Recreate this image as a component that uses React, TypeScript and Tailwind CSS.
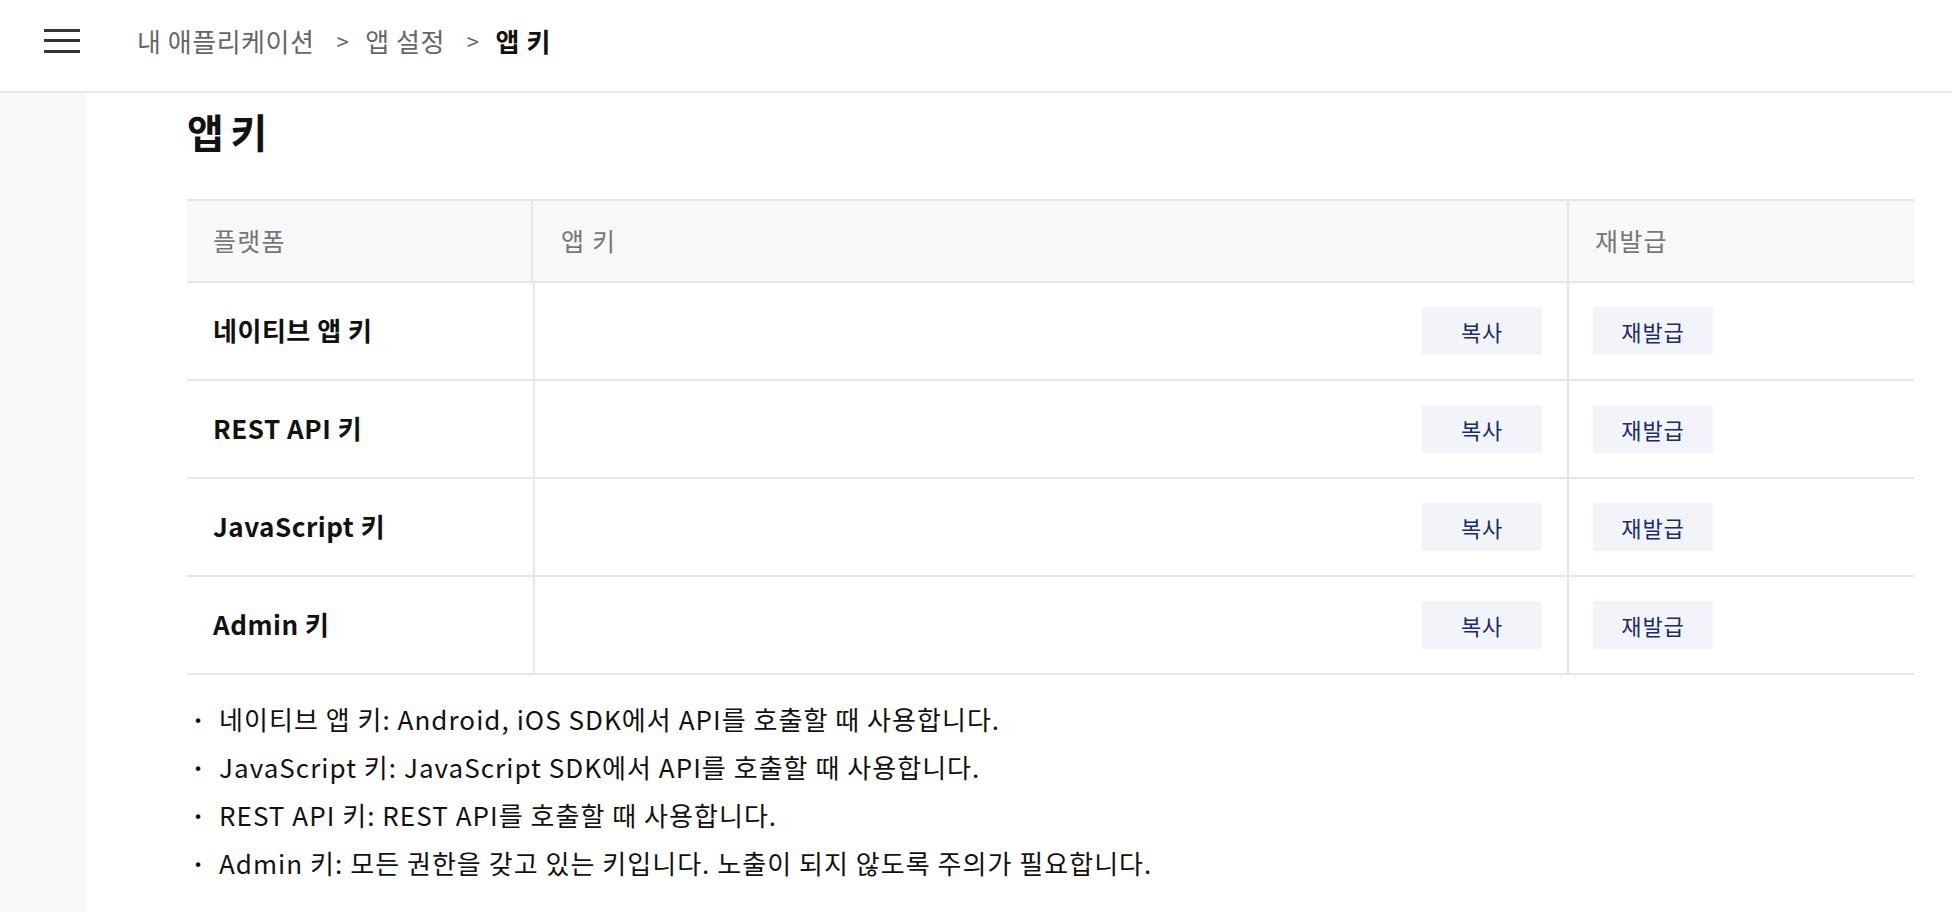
import React from 'react';

const rows = ['네이티브 앱 키', 'REST API 키', 'JavaScript 키', 'Admin 키'];

const notes = [
  '네이티브 앱 키: Android, iOS SDK에서 API를 호출할 때 사용합니다.',
  'JavaScript 키: JavaScript SDK에서 API를 호출할 때 사용합니다.',
  'REST API 키: REST API를 호출할 때 사용합니다.',
  'Admin 키: 모든 권한을 갖고 있는 키입니다. 노출이 되지 않도록 주의가 필요합니다.',
];

function Header() {
  return (
    <header className="h-[93px] pb-[10px] flex items-center border-b-2 border-[#e8e8e8] bg-white">
      <button className="ml-[44px] w-[36px] h-[24px] flex flex-col justify-between">
        <span className="block h-[3px] w-full bg-[#333]" />
        <span className="block h-[3px] w-full bg-[#333]" />
        <span className="block h-[3px] w-full bg-[#333]" />
      </button>
      <nav className="ml-[57px] flex items-center text-[26px] tracking-[0.02em] text-[#666]">
        <span>내 애플리케이션</span>
        <span className="ml-[22px] text-[22px]">&gt;</span>
        <span className="ml-[16px]">앱 설정</span>
        <span className="ml-[22px] text-[22px]">&gt;</span>
        <span className="ml-[16px] font-bold text-[#111]">앱 키</span>
      </nav>
    </header>
  );
}

function SmallButton({ label }: { label: string }) {
  return (
    <button className="w-[120px] h-[48px] rounded-[2px] bg-[#f2f4fa] text-[22px] tracking-[0.04em] text-[#1b2a6b]">
      {label}
    </button>
  );
}

function KeyTable() {
  return (
    <div className="border-t-2 border-[#e6e6e6]">
      <div className="grid grid-cols-[346px_1036px_1fr] h-[82px] bg-[#f8f8f8] border-b-2 border-[#e6e6e6] text-[25px] tracking-[0.05em] text-[#777]">
        <div className="flex items-center pl-[26px] border-r-2 border-[#e6e6e6]">플랫폼</div>
        <div className="flex items-center pl-[28px] border-r-2 border-[#e6e6e6]">앱 키</div>
        <div className="flex items-center pl-[26px]">재발급</div>
      </div>
      {rows.map((name) => (
        <div key={name} className="grid grid-cols-[346px_1036px_1fr] h-[98px] border-b-2 border-[#e6e6e6]">
          <div className="flex items-center pl-[26px] pb-[4px] text-[26px] font-bold tracking-[0.02em] text-[#111]">
            {name}
          </div>
          <div className="flex items-center justify-end pr-[25px] border-l-2 border-r-2 border-[#e6e6e6]">
            <SmallButton label="복사" />
          </div>
          <div className="flex items-center pl-[24px]">
            <SmallButton label="재발급" />
          </div>
        </div>
      ))}
    </div>
  );
}

export default function App() {
  return (
    <div className="w-[1952px] h-[912px] overflow-hidden bg-white font-['Noto_Sans_CJK_KR','Noto_Sans',sans-serif] flex flex-col">
      <Header />
      <div className="flex flex-1">
        <aside className="w-[86px] bg-[#f8f8f8]" />
        <main className="flex-1 pl-[101px] pr-[38px]">
          <h1 className="mt-[12px] h-[94px] flex items-start text-[40px] leading-[52px] font-bold tracking-[-0.03em] text-[#111]">
            앱 키
          </h1>
          <KeyTable />
          <ul className="mt-[25px] flex flex-col gap-[12px]">
            {notes.map((n) => (
              <li key={n} className="flex items-center h-[36px] text-[26px] tracking-[0.04em] text-[#111]">
                <span className="w-[32px] pl-[8px] text-[18px]">•</span>
                <span>{n}</span>
              </li>
            ))}
          </ul>
        </main>
      </div>
    </div>
  );
}
